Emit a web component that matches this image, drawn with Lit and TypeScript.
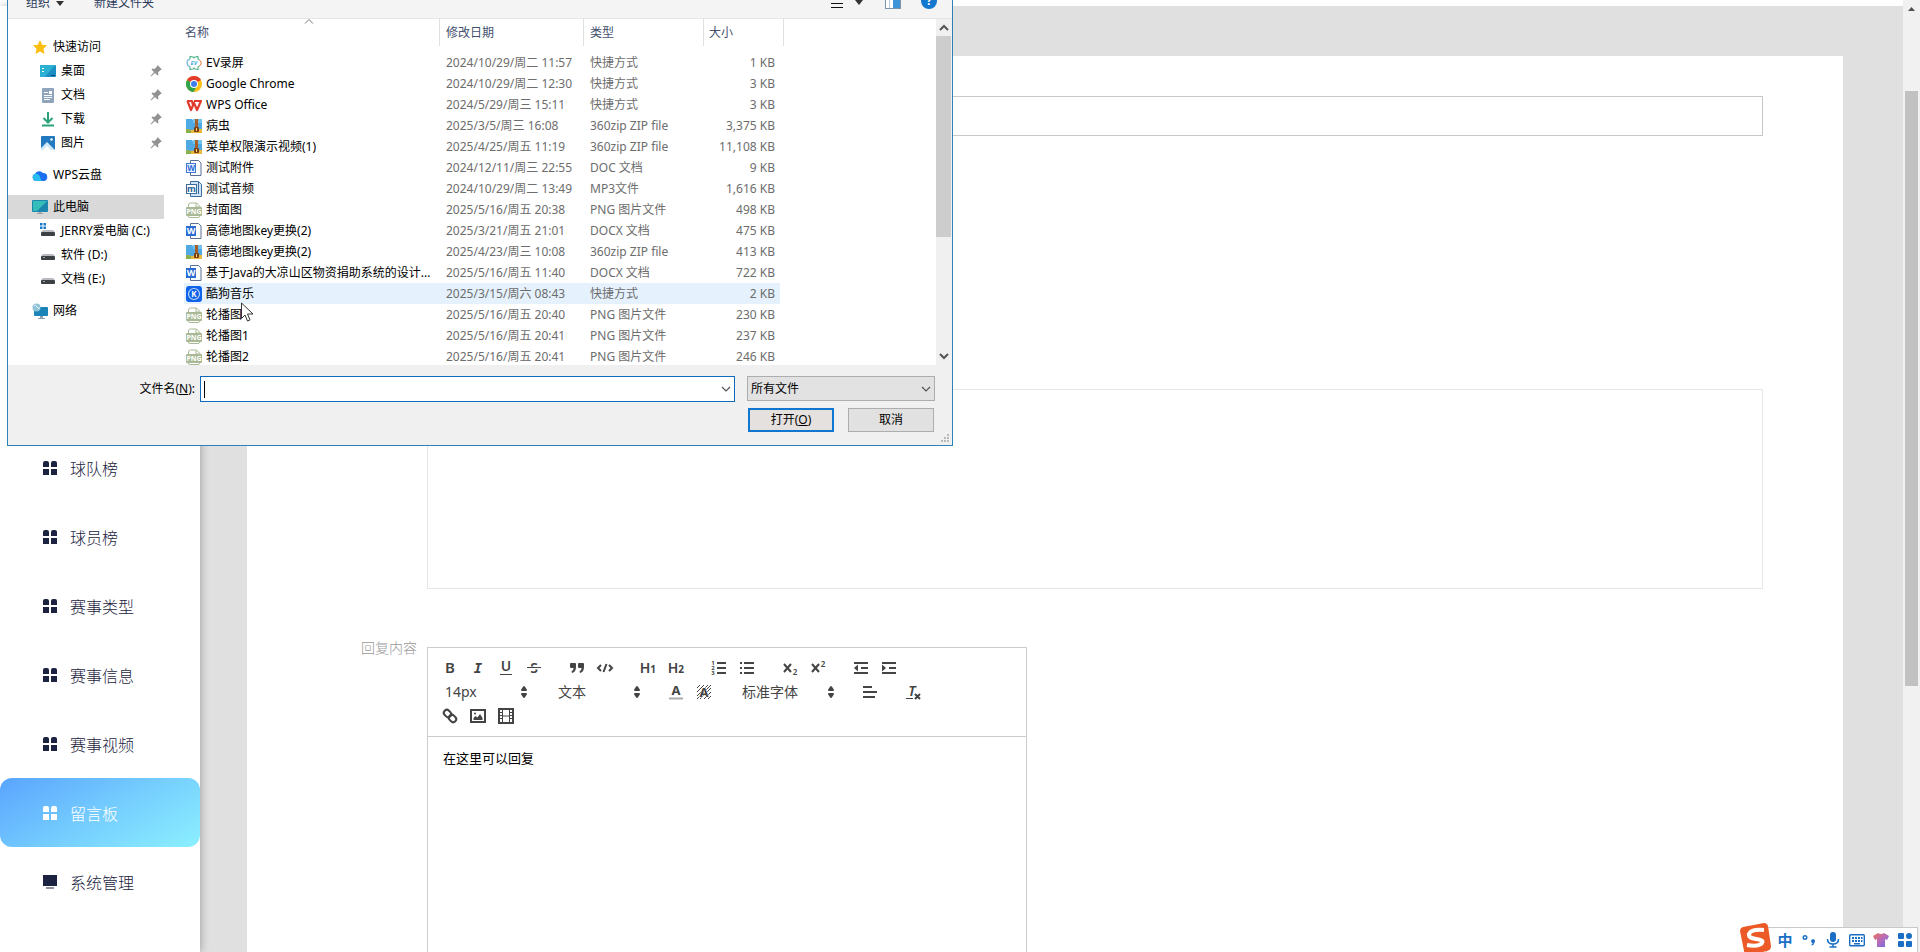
import { LitElement, html, svg, css } from "lit";
import { customElement } from "lit/decorators.js";
import { classMap } from "lit/directives/class-map.js";

/* ---------- 16px icons of the file dialog ---------- */
const word = svg`
  <path d="M4.500 .5h8l2.500 2.500v12.500h-10.500z" fill="#fff" stroke="#5b6f93"/>
  <rect x="0" y="3" width="10" height="10" fill="#2b6cd4"/>
  <text x="5" y="11" text-anchor="middle" font-size="9" font-weight="700" fill="#fff">W</text>`;
const png = svg`
  <path d="M2.500 5.500v-2.500q0-2 2-2h6l3.500 3.500v1" fill="#fff" stroke="#a9b995"/>
  <path d="M10 1v4h4" fill="none" stroke="#a9b995"/>
  <path d="M2 13.500q0 2 2 2h8q2 0 2-2" fill="#fff" stroke="#a9b995"/>
  <rect x="0" y="5" width="16" height="9" rx="1" fill="#a9b995"/>
  <text x="8" y="12" text-anchor="middle" font-size="7" font-weight="700" fill="#fff">PNG</text>`;
const zip = svg`
  <path d="M0 1h6l1.500 2H16V12H0z" fill="#4fa9e2"/>
  <path d="M7 1h9v4H7z" fill="#72c3f0"/>
  <path d="M0 11l6 1 4-1h6v4H0z" fill="#e8b93c"/>
  <path d="M0 11l5 1v3H0z" fill="#8bb04b"/>
  <rect x="9" y="1" width="3" height="9" fill="#a5602a"/>
  <rect x="8" y="9" width="5" height="5" rx="1" fill="#7a3f18"/>
  <rect x="10" y="10" width="1" height="3" fill="#ffd86b"/>`;
const drive = svg`
  <path d="M3 7h10l2 2H1z" fill="#b9bcc0"/><rect x="1" y="9" width="14" height="4" rx="1" fill="#3c4043"/>
  <rect x="3" y="10" width="2" height="1" fill="#9aa"/>`;

const icons: Record<string, unknown> = {
  ev: svg`<g fill="none" stroke-width="1.200">
      <path d="M4 4V1.500l3 .5 1 1 1-1 3-.5V4l1.500 1" stroke="#58b58f"/>
      <path d="M4 12v2.500l3-.5 1-1 1 1 3 .5V12l1.500-1" stroke="#58b58f"/>
      <path d="M4 4L1.500 5.500 1 8l1 2.500L4 12" stroke="#6cb9d8"/>
      <path d="M13.500 5l1.500 2v2l-1.500 2" stroke="#e9935b"/></g>
      <text x="8" y="10" text-anchor="middle" font-size="6" font-style="italic" font-weight="700" fill="#4fb0e0">EV</text>`,
  chrome: svg`<circle cx="8" cy="8" r="8" fill="#fbc116"/>
      <path d="M8 8L1.070 4A8 8 0 0 1 14.930 4z" fill="#e33b2e"/>
      <path d="M8 8L1.070 4A8 8 0 0 0 7.500 16L11 10z" fill="#2fa24c"/>
      <circle cx="8" cy="8" r="4" fill="#fff"/><circle cx="8" cy="8" r="3" fill="#3b7de9"/>`,
  wps: svg`<path d="M1 4h5l1 4M1.500 4l3.500 9 3-7 3 7 4-9H8" fill="none" stroke="#e23a2c" stroke-width="2.200" stroke-linejoin="round"/>`,
  zip,
  doc: svg`<path d="M4.500 .5h8l2.500 2.500v12.500h-10.500z" fill="#fff" stroke="#5b6f93"/>
      <rect x=".5" y="3.500" width="9" height="9" fill="#eaf2ff" stroke="#3f78d0"/>
      <text x="5" y="11" text-anchor="middle" font-size="8" font-weight="700" fill="#2b6cd4">W</text>`,
  mp3: svg`<path d="M4.500 .5h8l3 3v12h-11z" fill="#cfe4f7" stroke="#3c6c9d"/>
      <path d="M12.500 1v12" stroke="#3c6c9d"/>
      <rect x=".5" y="3.500" width="10" height="9" fill="#fff" stroke="#3c6c9d"/>
      <text x="5.500" y="11" text-anchor="middle" font-size="9" font-weight="700" fill="#2a5f96">m</text>`,
  png,
  word,
  kugou: svg`<rect width="16" height="16" rx="3" fill="#0f62ea"/>
      <circle cx="8" cy="8" r="5.500" fill="none" stroke="#b9d6ff" stroke-width="1.200"/>
      <text x="8" y="11" text-anchor="middle" font-size="8" font-weight="700" fill="#fff">K</text>`,
  star: svg`<path d="M8 1l2.200 4.700 5 .6-3.700 3.500 1 5.200L8 12.500 3.500 15l1-5.200L.8 6.300l5-.6z" fill="#fcbf14"/>`,
  desktop: svg`<rect y="2" width="16" height="12" rx="1" fill="#1a8fc4"/><path d="M0 3q0-1 1-1h14L5 14H0z" fill="#2ab0d2"/>
      <path d="M2 5h2v1H2zM2 8h2v1H2z" fill="#fff"/><path d="M11 12h4v1h-4z" fill="#0c4a78"/>`,
  docs: svg`<rect x="2" y="1" width="12" height="15" rx="1" fill="#8fa5bd"/>
      <path d="M4 5h4v1H4zM9 4h3v3H9zM4 8h8v1H4zM4 10h8v1H4zM4 12h6v1H4z" fill="#fff"/>`,
  download: svg`<path d="M8 1v10M3.500 7L8 11.500 12.500 7" fill="none" stroke="#2aa27a" stroke-width="2"/><path d="M2 14.500h12" stroke="#2aa27a" stroke-width="2"/>`,
  pictures: svg`<rect x="1" y="1" width="14" height="14" rx="1" fill="#2379bf"/>
      <path d="M1 15v-2l6-6 8 8h-4l-4-3-3 3z" fill="#cfe8fa"/><path d="M3 15l4-4 4 4z" fill="#fff"/><circle cx="11.500" cy="4.500" r="1.200" fill="#fff"/>`,
  cloud: svg`<path d="M4 14a3.800 3.800 0 0 1-1-7.300A4.800 4.800 0 0 1 11 6a4 4 0 0 1 .5 8z" fill="#1c6ff0"/>
      <path d="M4 14a3.800 3.800 0 0 1 0-7.500c2 0 3 1.500 4 3.500s1 4 3 4z" fill="#29bdf2"/>`,
  pc: svg`<rect y="1" width="16" height="12" rx="1" fill="#1d86ad"/><path d="M1 2h14L5 12H1z" fill="#35bdb9"/>
      <path d="M7 13h2v1h2v1H5v-1h2z" fill="#9aa0a6"/>`,
  windrive: svg`<path d="M0 0h2.500v2.500H0zM3.500 0H6v2.500H3.500zM0 3.500h2.500V6H0zM3.500 3.500H6V6H3.500z" fill="#1479c9"/>
      <path d="M3 7h10l2 2H1z" fill="#b9bcc0"/><rect x="1" y="9" width="14" height="4" rx="1" fill="#3c4043"/>`,
  drive,
  network: svg`<rect x="2" y="4" width="14" height="9" rx="1" fill="#1b83b8"/><path d="M8 13h3v2h2v1H6v-1h2z" fill="#8da0ad"/>
      <circle cx="4.500" cy="4.500" r="4" fill="#8fc3d8"/><path d="M2 2q2 0 3 2t3 1" fill="none" stroke="#e7f5fa"/>`,
};
const icon16 = (name: string) => html`<svg class="i16" viewBox="0 0 16 16" aria-hidden="true">${icons[name]}</svg>`;
const chevron = html`<svg class="chev" viewBox="0 0 10 10" aria-hidden="true"><path d="M1 3l4 4 4-4" /></svg>`;

/* ---------- file open dialog ---------- */
const files = [
  ["ev", "EV录屏", "2024/10/29/周二 11:57", "快捷方式", "1 KB"],
  ["chrome", "Google Chrome", "2024/10/29/周二 12:30", "快捷方式", "3 KB"],
  ["wps", "WPS Office", "2024/5/29/周三 15:11", "快捷方式", "3 KB"],
  ["zip", "病虫", "2025/3/5/周三 16:08", "360zip ZIP file", "3,375 KB"],
  ["zip", "菜单权限演示视频(1)", "2025/4/25/周五 11:19", "360zip ZIP file", "11,108 KB"],
  ["doc", "测试附件", "2024/12/11/周三 22:55", "DOC 文档", "9 KB"],
  ["mp3", "测试音频", "2024/10/29/周二 13:49", "MP3文件", "1,616 KB"],
  ["png", "封面图", "2025/5/16/周五 20:38", "PNG 图片文件", "498 KB"],
  ["word", "高德地图key更换(2)", "2025/3/21/周五 21:01", "DOCX 文档", "475 KB"],
  ["zip", "高德地图key更换(2)", "2025/4/23/周三 10:08", "360zip ZIP file", "413 KB"],
  ["word", "基于Java的大凉山区物资捐助系统的设计...", "2025/5/16/周五 11:40", "DOCX 文档", "722 KB"],
  ["kugou", "酷狗音乐", "2025/3/15/周六 08:43", "快捷方式", "2 KB"],
  ["png", "轮播图", "2025/5/16/周五 20:40", "PNG 图片文件", "230 KB"],
  ["png", "轮播图1", "2025/5/16/周五 20:41", "PNG 图片文件", "237 KB"],
  ["png", "轮播图2", "2025/5/16/周五 20:41", "PNG 图片文件", "246 KB"],
];

type Place = { icon: string; label: string; sub?: boolean; pin?: boolean; current?: boolean };
const places: Place[][] = [
  [
    { icon: "star", label: "快速访问" },
    { icon: "desktop", label: "桌面", sub: true, pin: true },
    { icon: "docs", label: "文档", sub: true, pin: true },
    { icon: "download", label: "下载", sub: true, pin: true },
    { icon: "pictures", label: "图片", sub: true, pin: true },
  ],
  [{ icon: "cloud", label: "WPS云盘" }],
  [
    { icon: "pc", label: "此电脑", current: true },
    { icon: "windrive", label: "JERRY爱电脑 (C:)", sub: true },
    { icon: "drive", label: "软件 (D:)", sub: true },
    { icon: "drive", label: "文档 (E:)", sub: true },
  ],
  [{ icon: "network", label: "网络" }],
];

@customElement("file-dialog")
class FileDialog extends LitElement {
  static styles = css`
    :host {
      display: flex;
      flex-direction: column;
      box-sizing: border-box;
      border: 1px solid #2a82b8;
      border-top: 0;
      background: #f0f0f0;
      color: #000;
      font: 12px/16px "Noto Sans", "Noto Sans CJK SC", sans-serif;
    }
    * { box-sizing: border-box; }
    button, input, select { font: inherit; color: inherit; margin: 0; border: 0; padding: 0; background: none; border-radius: 0; outline: 0; }
    .i16 { width: 16px; height: 16px; flex: none; display: block; overflow: visible; }
    .chev { width: 10px; height: 10px; flex: none; fill: none; stroke: #555; stroke-width: 1.2; }
    .bar {
      display: flex; align-items: flex-end; height: 19px; flex: none; overflow: hidden;
      background: #f4f4f5; border-bottom: 1px solid #e6e6e6; padding: 0 15px 7px 18px; color: #2c3a5c;
    }
    .bar button { display: flex; align-items: center; gap: 6px; height: 16px; white-space: nowrap; }
    .bar .new { margin-left: 30px; flex: 1; }
    .tri { width: 8px; height: 8px; fill: #333; }
    .bar .view { margin-right: 22px; gap: 12px; }
    .pane { margin-right: 20px; }
    .body { display: flex; height: 346px; background: #fff; }
    .tree { width: 156px; padding: 16px 0 0; display: flex; flex-direction: column; gap: 8px; }
    .group { list-style: none; margin: 0; padding: 0; }
    .place { display: flex; align-items: center; gap: 5px; height: 24px; padding: 0 2px 0 24px; white-space: nowrap; }
    .place.sub { padding-left: 32px; }
    .place.current { background: #d9d9d9; }
    .pin { margin-left: auto; width: 12px; height: 12px; fill: #929292; }
    .list { flex: 1; padding-left: 20px; min-width: 0; overflow: hidden; }
    table { border-collapse: collapse; table-layout: fixed; width: 596px; }
    th, td { padding: 0 0 0 6px; text-align: left; font-weight: 400; white-space: nowrap; height: 21px; }
    th { height: 33px; padding: 0; vertical-align: top; color: #43506e; }
    .head { display: flex; align-items: center; height: 27px; border-right: 1px solid #e0e0e0; padding: 1px 0 0 6px; position: relative; }
    .head.first { padding-left: 1px; }
    .head.last { margin-right: -4px; padding-left: 5px; }
    .sort { position: absolute; left: 50%; top: -1px; margin-left: -8px; width: 10px; height: 7px; fill: none; stroke: #777; }
    .name { width: 256px; }
    .date { width: 144px; }
    .type { width: 120px; }
    td { color: #6d6d6d; }
    td.file { padding-left: 2px; color: #000; }
    td.size { text-align: right; padding-right: 5px; }
    .cell { display: flex; align-items: center; gap: 4px; }
    tr.hover { background: #e5f2fd; }
    .scroll { width: 16px; flex: none; background: #f0f0f0; display: flex; flex-direction: column; align-items: center; padding: 4px 1px 4px 0; }
    .scroll .chev { stroke-width: 2; }
    .thumb { width: 15px; height: 201px; background: #cdcdcd; margin-top: 3px; }
    .down { margin-top: auto; }
    .foot { flex: 1; display: grid; grid-template-columns: 188px 1fr 188px; padding: 11px 17px 0 0; align-content: start; row-gap: 6px; }
    .foot label { text-align: right; padding-right: 1px; line-height: 26px; }
    .combo { display: flex; align-items: center; height: 26px; margin: 0 12px 0 4px; background: #fff; border: 1px solid #0d6cbd; padding: 0 3px; }
    .caret { width: 1px; height: 17px; background: #000; }
    .combo input { flex: 1; min-width: 0; height: 22px; }
    .combo button { display: flex; }
    .filter { position: relative; }
    .filter select { appearance: none; width: 100%; height: 25px; background: #e2e2e3; border: 1px solid #adadad; padding: 0 3px; }
    .filter .chev { position: absolute; right: 4px; top: 8px; }
    .actions { grid-column: 3; display: grid; grid-template-columns: 1fr 1fr; gap: 14px; padding: 0 1px; }
    .actions button { height: 24px; background: #e1e1e1; border: 1px solid #adadad; }
    .actions .open { border: 2px solid #0f77d0; background: #e5e1de; }
    .grip { position: absolute; right: 2px; bottom: 2px; width: 9px; height: 9px; fill: #b8b8b8; }
  `;

  render() {
    return html`
      <div class="bar">
        <button>组织<svg class="tri" viewBox="0 0 8 8"><path d="M0 2h8L4 7z" /></svg></button>
        <button class="new">新建文件夹</button>
        <button class="view" aria-label="视图">
          <svg width="12" height="12" viewBox="0 0 12 12"><path d="M0 2.500h12M0 6.500h12M0 10.500h12" stroke="#111" /></svg>
          <svg class="tri" viewBox="0 0 8 8"><path d="M0 1h8L4 6z" /></svg>
        </button>
        <button class="pane" aria-label="预览窗格">
          <svg width="16" height="14" viewBox="0 0 16 14"><rect x=".5" y=".5" width="15" height="12" fill="#fff" stroke="#7f93a8" /><path d="M4.500 1v11" stroke="#b9c6d3" /><rect x="8" y="1" width="7" height="11" fill="#3f93d9" /></svg>
        </button>
        <button aria-label="帮助">
          <svg width="16" height="16" viewBox="0 0 16 16"><circle cx="8" cy="6" r="8" fill="#1378ce" /><text x="8" y="10" text-anchor="middle" font-size="12" font-weight="700" fill="#fff">?</text></svg>
        </button>
      </div>
      <div class="body">
        <nav class="tree">
          ${places.map(
            (g) => html`<ul class="group">
              ${g.map(
                (p) => html`<li class=${classMap({ place: true, sub: !!p.sub, current: !!p.current })}>
                  ${icon16(p.icon)}<span>${p.label}</span>
                  ${p.pin
                    ? html`<svg class="pin" viewBox="0 0 12 12"><path d="M7.500 0L12 4.500l-1.500.5-2.500 2.500.5 2-1 1L5 8l-4 3.500-.5-.5L4 7 1.500 4.500l1-1 2 .5L7 1.500z" /></svg>`
                    : null}
                </li>`
              )}
            </ul>`
          )}
        </nav>
        <div class="list">
          <table>
            <thead>
              <tr>
                <th class="name"><div class="head first">名称<svg class="sort" viewBox="0 0 10 7"><path d="M1 5.500l4-4 4 4" /></svg></div></th>
                <th class="date"><div class="head">修改日期</div></th>
                <th class="type"><div class="head">类型</div></th>
                <th><div class="head last">大小</div></th>
              </tr>
            </thead>
            <tbody>
              ${files.map(
                ([icon, name, date, type, size]) => html`<tr class=${classMap({ hover: icon === "kugou" })}>
                  <td class="file"><div class="cell">${icon16(icon)}<span>${name}</span></div></td>
                  <td>${date}</td>
                  <td>${type}</td>
                  <td class="size">${size}</td>
                </tr>`
              )}
            </tbody>
          </table>
        </div>
        <div class="scroll">
          <svg class="chev" viewBox="0 0 10 10"><path d="M1 7l4-4 4 4" /></svg>
          <div class="thumb"></div>
          <svg class="chev down" viewBox="0 0 10 10"><path d="M1 3l4 4 4-4" /></svg>
        </div>
      </div>
      <div class="foot">
        <label for="filename">文件名(<u>N</u>):</label>
        <div class="combo"><span class="caret"></span><input id="filename" type="text" /><button aria-label="展开">${chevron}</button></div>
        <div class="filter"><select aria-label="文件类型"><option>所有文件</option></select>${chevron}</div>
        <div class="actions"><button class="open">打开(<u>O</u>)</button><button>取消</button></div>
      </div>
      <svg class="grip" viewBox="0 0 9 9"><path d="M6 0h2v2H6zM3 3h2v2H3zM6 3h2v2H6zM0 6h2v2H0zM3 6h2v2H3zM6 6h2v2H6z" /></svg>
    `;
  }
}

/* ---------- rich text editor ---------- */
const glyph = (t: string, x: number, y: number, size: number, extra = "") =>
  svg`<text class="g ${extra}" x=${x} y=${y} font-size=${size} text-anchor="middle">${t}</text>`;

const tools: Record<string, unknown> = {
  加粗: glyph("B", 9, 14, 15, "m"),
  斜体: glyph("I", 9, 14, 14, "i"),
  下划线: svg`${glyph("U", 9, 12, 14, "m")}<path d="M3 15.500h12" stroke="#444" stroke-width="1"/>`,
  删除线: svg`${glyph("S", 9, 14, 14, "m")}<path d="M2 9h14" stroke="#fff" stroke-width="3"/><path d="M2 8.500h14" stroke="#444" stroke-width="1"/>`,
  引用: svg`<path class="f" d="M3 4h4q1 0 1 1v3q0 5-4 6l-.5-1.500Q5.500 11 5.700 9H3Q2 9 2 8V5q0-1 1-1zM11 4h4q1 0 1 1v3q0 5-4 6l-.5-1.500q2-1.500 2.200-3.500H11q-1 0-1-1V5q0-1 1-1z"/>`,
  代码: svg`<path class="s" d="M5 6L2 9l3 3M13 6l3 3-3 3M10.500 5l-3 8"/>`,
  标题1: svg`${glyph("H", 6, 14, 14, "m")}${glyph("1", 14, 14, 10, "b")}`,
  标题2: svg`${glyph("H", 6, 14, 14, "m")}${glyph("2", 14, 14, 10, "b")}`,
  有序列表: svg`<path class="s" d="M7 4h9M7 9h9M7 14h9"/>${glyph("1", 3, 6, 6, "b")}${glyph("2", 3, 11, 6, "b")}${glyph("3", 3, 16, 6, "b")}`,
  无序列表: svg`<path class="s" d="M6 4h10M6 9h10M6 14h10M2 4h2M2 9h2M2 14h2"/>`,
  下标: svg`<path class="s" d="M3 5l7 8M10 5l-7 8"/>${glyph("2", 14, 16, 8, "m")}`,
  上标: svg`<path class="s" d="M3 5l7 8M10 5l-7 8"/>${glyph("2", 14, 8, 8, "m")}`,
  减少缩进: svg`<path class="s" d="M2 4h14M9 9h7M2 14h14"/><path class="f" d="M6 5.500v7L2 9z"/>`,
  增加缩进: svg`<path class="s" d="M2 4h14M9 9h7M2 14h14"/><path class="f" d="M2 5.500v7L6 9z"/>`,
  文字颜色: svg`${glyph("A", 9, 12, 13, "b")}<path d="M2 15.500h14" stroke="#aaa" stroke-width="2"/>`,
  背景颜色: svg`<path d="M2 5l3-3M2 9l7-7M2 13L13 2M2 16L16 2M5 16L16 5M9 16l7-7M13 16l3-3" stroke="#444" stroke-width="1"/>${glyph("A", 9, 14, 13, "b halo")}`,
  对齐: svg`<path class="s" d="M2 4h9M2 9h14M2 14h12"/>`,
  清除格式: svg`${glyph("T", 8, 13, 14, "it")}<path d="M2 15.500h7" stroke="#444" stroke-width="1"/><path class="s" d="M11 11l5 5M16 11l-5 5"/>`,
  链接: svg`<g class="s" transform="rotate(45 9 9)"><rect x="1.500" y="6" width="8" height="6" rx="3"/><rect x="8.500" y="6" width="8" height="6" rx="3"/></g>`,
  图片: svg`<rect class="s" x="2" y="3" width="14" height="12"/><path class="f" d="M4.500 13v-2l2-2 2 1.500L11 7l2.500 4v2z"/><circle class="f" cx="6" cy="6.500" r="1"/>`,
  视频: svg`<rect class="s" x="2" y="2" width="14" height="14"/><path class="s1" d="M5.500 2v14M12.500 2v14"/><path class="s1" d="M5 9h8M3 5.500h2M3 8.500h2M3 11.500h2M13 5.500h2M13 8.500h2M13 11.500h2"/>`,
};

@customElement("rich-editor")
class RichEditor extends LitElement {
  static styles = css`
    :host {
      display: flex; flex-direction: column; box-sizing: border-box; border: 1px solid #ccc; color: #000;
      font: 13px/18px "Noto Sans CJK SC", sans-serif;
    }
    .tools { display: flex; flex-wrap: wrap; padding: 8px; border-bottom: 1px solid #ccc; }
    .group { display: flex; margin-right: 15px; }
    .tool { width: 28px; height: 24px; padding: 3px 5px; border: 0; background: none; }
    .tool svg, .pick svg { display: block; width: 18px; height: 18px; overflow: visible; }
    .s { fill: none; stroke: #444; stroke-width: 2; }
    .s1 { fill: none; stroke: #444; stroke-width: 1; }
    .f { fill: #444; }
    .g { fill: #444; font-family: "Noto Sans", sans-serif; }
    .b { font-weight: 700; }
    .m { font-weight: 600; }
    .i { font-family: "DejaVu Sans Mono", monospace; font-style: italic; font-weight: 700; }
    .it { font-style: italic; font-weight: 600; }
    .halo { paint-order: stroke; stroke: #fff; stroke-width: 1px; }
    .pick { position: relative; width: 98px; height: 24px; margin-right: 15px; }
    .pick.wide { width: 108px; }
    .pick select {
      appearance: none; width: 100%; height: 24px; border: 0; background: none; margin: 0; outline: 0;
      padding: 0 0 0 9px; color: #444; font: 14px/22px "Noto Sans", "Noto Sans CJK SC", sans-serif;
    }
    .pick svg { position: absolute; right: 1px; top: 3px; pointer-events: none; }
    .text { flex: 1; padding: 12px 15px; outline: 0; }
    p { margin: 0; }
  `;

  private group(...names: string[]) {
    return html`<span class="group">
      ${names.map((n) => html`<button class="tool" aria-label=${n}><svg viewBox="0 0 18 18">${tools[n]}</svg></button>`)}
    </span>`;
  }

  private picker(label: string, value: string, wide = false) {
    return html`<span class=${classMap({ pick: true, wide })}>
      <select aria-label=${label}><option>${value}</option></select>
      <svg viewBox="0 0 18 18"><path class="f" d="M7 7l2-3 2 3zM7 11l2 3 2-3z" stroke="#444" stroke-width="2" stroke-linejoin="round" /></svg>
    </span>`;
  }

  render() {
    return html`
      <div class="tools">
        ${this.group("加粗", "斜体", "下划线", "删除线")} ${this.group("引用", "代码")} ${this.group("标题1", "标题2")}
        ${this.group("有序列表", "无序列表")} ${this.group("下标", "上标")} ${this.group("减少缩进", "增加缩进")}
        ${this.picker("字号", "14px")} ${this.picker("段落", "文本")} ${this.group("文字颜色", "背景颜色")}
        ${this.picker("字体", "标准字体", true)} ${this.group("对齐")} ${this.group("清除格式")}
        ${this.group("链接", "图片", "视频")}
      </div>
      <div class="text" contenteditable="true" role="textbox" aria-label="回复内容"><p>在这里可以回复</p></div>
    `;
  }
}

/* ---------- input method bar ---------- */
@customElement("ime-bar")
class ImeBar extends LitElement {
  static styles = css`
    :host {
      display: flex; align-items: center; box-sizing: border-box; height: 25px; padding-left: 6px;
      background: #fff; border: 1px solid #c9c9c9; border-bottom: 0; color: #1a6fc4;
      font: 700 15px/20px "Noto Sans CJK SC", sans-serif;
    }
    button { width: 24px; height: 22px; padding: 0; border: 0; background: none; font: inherit; color: inherit; display: grid; place-items: center; }
    svg { width: 16px; height: 16px; fill: currentColor; }
    .logo { position: absolute; left: -28px; bottom: 0; width: 32px; height: 29px; overflow: hidden; }
  `;
  render() {
    return html`
      <svg class="logo" viewBox="0 0 32 29">
        <path d="M4 4L25 0Q28 0 29 3L32 23Q32 27 28 28L10 32Q6 32 5 28L1 8Q1 5 4 4z" fill="#ec5a28" />
        <path d="M25 7Q12 6 10 11Q9 15 17 16Q25 17 23 20Q20 24 8 22" fill="none" stroke="#fff" stroke-width="4" />
      </svg>
      <button aria-label="中文模式">中</button>
      <button aria-label="标点"><svg viewBox="0 0 16 16"><circle cx="4" cy="5.500" r="1.800" fill="none" stroke="currentColor" stroke-width="1.400" /><path d="M10 9a2 2 0 1 1 3.500 1.500Q13 13 10.500 13.500v-1q1-.5 1-1.500-1.500-.5-1.500-2z" /></svg></button>
      <button aria-label="语音"><svg viewBox="0 0 16 16"><rect x="5" y="0" width="6" height="10" rx="3" /><path d="M2.500 7q0 5 5.500 5t5.500-5M8 12v3M4.500 15h7" fill="none" stroke="currentColor" stroke-width="1.500" /></svg></button>
      <button aria-label="软键盘"><svg viewBox="0 0 16 16"><rect x=".7" y="2.700" width="14.600" height="11" rx="1" fill="none" stroke="currentColor" stroke-width="1.400" /><path d="M3 5h2v2H3zM6 5h2v2H6zM9 5h2v2H9zM12 5h1.500v2H12zM3 8h2v2H3zM6 8h2v2H6zM9 8h2v2H9zM12 8h1.500v2H12zM5 11h6v1.500H5z" /></svg></button>
      <button aria-label="皮肤"><svg viewBox="0 0 16 16"><defs><linearGradient id="skin" x2="1" y2="1"><stop offset="0" stop-color="#f0705a" /><stop offset=".55" stop-color="#b06cc0" /><stop offset="1" stop-color="#5a70e8" /></linearGradient></defs><path d="M5 1q3 2 6 0l5 3-2 4-2-1v8H4V7L2 8 0 4z" fill="url(#skin)" /></svg></button>
      <button aria-label="工具箱"><svg viewBox="0 0 16 16"><rect x="1" y="1" width="6" height="6" rx="1" /><circle cx="12" cy="4" r="3" /><rect x="1" y="9" width="6" height="6" rx="1" /><rect x="9" y="9" width="6" height="6" rx="1" /></svg></button>
    `;
  }
}

/* ---------- page ---------- */
const grid = svg`<path d="M0 2q0-2 2-2h2q2 0 2 2v4H0zM8 2q0-2 2-2h2q2 0 2 2v4H8zM0 8h6v6H0zM8 8h6v6H8z"/>`;
const screen = svg`<path d="M0 0h14v11H0zM3 12.500h8v1H3z"/>`;
const menu = ["球队榜", "球员榜", "赛事类型", "赛事信息", "赛事视频", "留言板", "系统管理"];

@customElement("app-root")
class AppRoot extends LitElement {
  static styles = css`
    :host {
      display: flex; flex-direction: column; height: 100vh; overflow: hidden; position: relative; background: #fff;
      font: 14px/20px "Noto Sans CJK SC", sans-serif;
    }
    * { box-sizing: border-box; }
    .top { height: 6px; flex: none; }
    .page { flex: 1; display: flex; min-height: 0; }
    .side { width: 200px; flex: none; background: #fff; padding-top: 427px; box-shadow: 1px 0 8px rgba(0, 0, 0, 0.28); z-index: 1; }
    .item { display: flex; align-items: center; gap: 13px; height: 69px; padding-left: 43px; font-size: 16px; font-weight: 300; color: #1b2340; text-decoration: none; }
    .item svg { width: 14px; height: 14px; fill: currentColor; }
    .item.active { color: #fff; border-radius: 12px; background: linear-gradient(150deg, #5aa4ff, #74ccfe 50%, #8cf0ff); }
    .main { flex: 1; min-width: 0; display: flex; background: #e0e0e0; padding: 50px 60px 0 47px; }
    .card {
      flex: 1; background: #fff; padding: 40px 80px 0 0; display: grid; row-gap: 58px;
      grid-template-columns: 180px 1fr; grid-template-rows: 40px 395px 1fr;
    }
    .field { grid-column: 2; width: 100%; margin: 0; border: 1px solid #c8c8c8; padding: 0 12px; font: inherit; resize: none; background: #fff; outline: 0; }
    .area { border-color: #e6e6e6; height: 200px; align-self: end; }
    .label { text-align: right; padding-right: 10px; color: #999; margin: -10px 0 0; font-weight: 300; }
    .editor { width: 600px; min-height: 400px; }
    .scroll { position: absolute; right: 0; top: 0; bottom: 0; width: 17px; background: #f1f1f1; padding: 6px 2px 0; }
    .scroll svg { display: block; width: 13px; height: 6px; fill: #505050; }
    .thumb { height: 595px; background: #c1c1c1; margin-top: 79px; }
    .gutter { width: 17px; flex: none; }
    .dialog { position: absolute; left: 7px; top: 0; width: 946px; height: 446px; z-index: 2; }
    .pointer { position: absolute; left: 241px; top: 302px; width: 13px; height: 20px; z-index: 3; }
    .ime { position: absolute; right: 2px; bottom: 0; z-index: 3; }
  `;

  render() {
    return html`
      <header class="top"></header>
      <div class="page">
        <nav class="side">
          ${menu.map(
            (m) => html`<a href="#" class=${classMap({ item: true, active: m === "留言板" })}>
              <svg viewBox="0 0 14 14" aria-hidden="true">${m === "系统管理" ? screen : grid}</svg>${m}
            </a>`
          )}
        </nav>
        <main class="main">
          <section class="card">
            <input class="field" type="text" aria-label="标题" />
            <textarea class="field area" aria-label="留言"></textarea>
            <span class="label">回复内容</span>
            <rich-editor class="editor"></rich-editor>
          </section>
        </main>
        <div class="gutter"></div>
      </div>
      <div class="scroll">
        <svg viewBox="0 0 13 6"><path d="M6.500 1L10 5H3z" /></svg>
        <div class="thumb"></div>
      </div>
      <file-dialog class="dialog"></file-dialog>
      <svg class="pointer" viewBox="0 0 13 20"><path d="M.5 1v15.500l3.500-3.500 2.500 6 2.500-1-2.500-6H12z" fill="#fff" stroke="#333" /></svg>
      <ime-bar class="ime"></ime-bar>
    `;
  }
}
